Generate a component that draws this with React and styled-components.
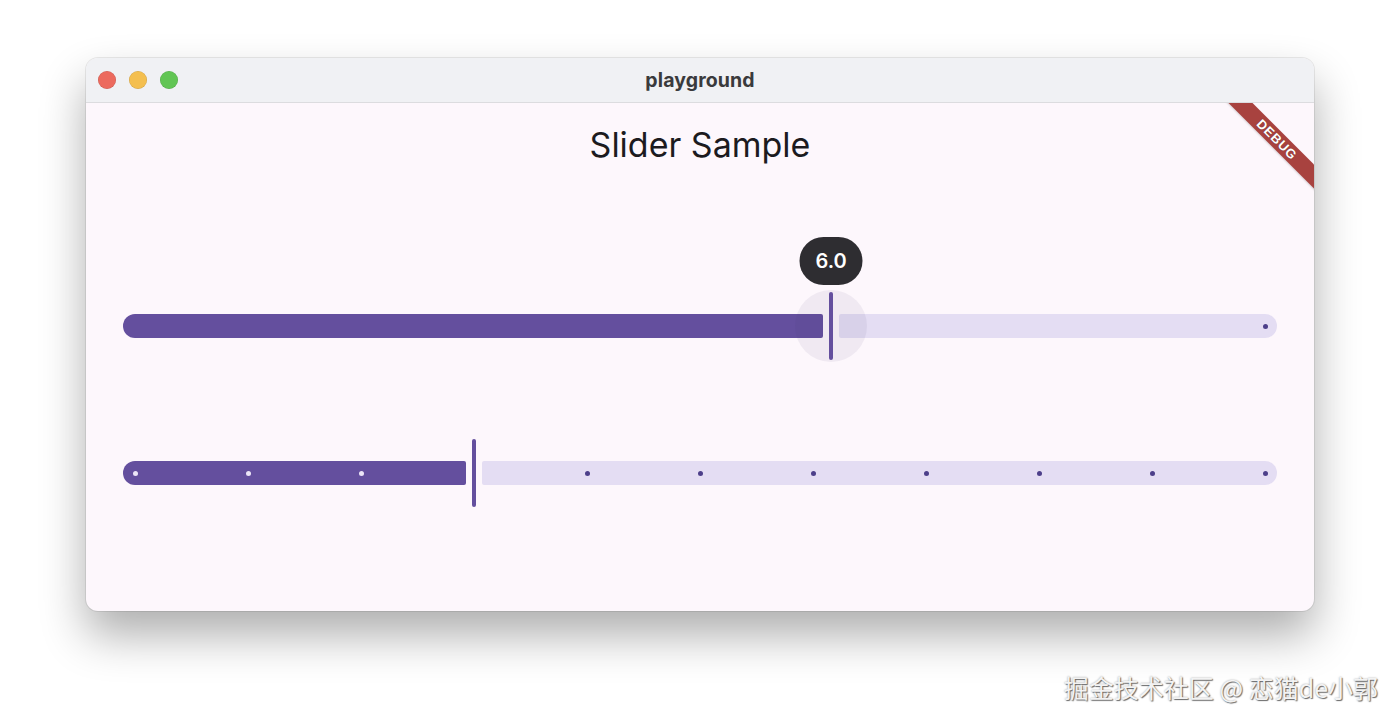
import React from "react";
import styled, { createGlobalStyle } from "styled-components";

const TRACK_WIDTH = 1154;
const EDGE = 12;

const GlobalStyle = createGlobalStyle`
  html, body {
    margin: 0;
    padding: 0;
    background: #ffffff;
  }
  body {
    font-family: Inter, "Noto Sans", "Liberation Sans", sans-serif;
  }
`;

const Page = styled.div`
  position: relative;
  width: 1400px;
  height: 725px;
  box-sizing: border-box;
  padding: 58px 86px 0;
  overflow: hidden;
`;

const Window = styled.div`
  height: 553px;
  display: flex;
  flex-direction: column;
  border-radius: 12px;
  overflow: hidden;
  background: #fdf7fc;
  box-shadow: 0 24px 46px rgba(0, 0, 0, 0.32), 0 0 0 1px rgba(0, 0, 0, 0.08);
`;

const TitleBar = styled.div`
  position: relative;
  height: 44px;
  flex-shrink: 0;
  display: flex;
  align-items: center;
  justify-content: center;
  background: #f0f1f4;
  border-bottom: 1px solid #dcdcdf;
`;

const Lights = styled.div`
  position: absolute;
  left: 12px;
  top: 13px;
  display: flex;
  gap: 13px;
`;

const Light = styled.span`
  width: 18px;
  height: 18px;
  border-radius: 50%;
  background: ${(p) => p.$color};
  box-shadow: inset 0 0 0 0.5px rgba(0, 0, 0, 0.15);
`;

const WindowTitle = styled.div`
  font-size: 19.5px;
  font-weight: 700;
  color: #3a3a3c;
  letter-spacing: 0.1px;
`;

const Content = styled.div`
  position: relative;
  flex: 1;
  display: flex;
  flex-direction: column;
  align-items: center;
  padding: 22px 37px 0;
  overflow: hidden;
`;

const Heading = styled.h1`
  margin: 0;
  font-size: 34px;
  line-height: 40px;
  font-weight: 400;
  color: #1c1b1f;
`;

const SliderList = styled.div`
  margin-top: 127px;
  display: flex;
  flex-direction: column;
  gap: 79px;
`;

const SliderRow = styled.div`
  position: relative;
  width: ${TRACK_WIDTH}px;
  height: 68px;
  display: flex;
  align-items: center;
`;

const ActiveTrack = styled.div`
  height: 24px;
  background: #644f9e;
  border-radius: 12px 2px 2px 12px;
`;

const InactiveTrack = styled.div`
  flex: 1;
  height: 24px;
  background: #e4ddf3;
  border-radius: 2px 12px 12px 2px;
`;

const Handle = styled.div`
  position: relative;
  width: 16px;
  height: 68px;
  display: flex;
  justify-content: center;
`;

const ThumbBar = styled.div`
  width: 4px;
  height: 68px;
  border-radius: 2px;
  background: #644f9e;
  position: relative;
  z-index: 2;
`;

const Halo = styled.div`
  position: absolute;
  left: 50%;
  top: 50%;
  width: 72px;
  height: 72px;
  margin: -36px 0 0 -36px;
  border-radius: 50%;
  background: rgba(73, 60, 110, 0.07);
  z-index: 1;
  pointer-events: none;
`;

const ValueBubble = styled.div`
  position: absolute;
  left: 50%;
  bottom: calc(100% + 7px);
  transform: translateX(-50%);
  width: 63px;
  height: 48px;
  border-radius: 24px;
  background: #2e2d31;
  color: #ffffff;
  display: flex;
  align-items: center;
  justify-content: center;
  font-size: 20px;
  font-weight: 600;
  z-index: 3;
`;

const Tick = styled.span`
  position: absolute;
  top: 50%;
  width: 5px;
  height: 5px;
  margin: -2.5px 0 0 -2.5px;
  border-radius: 50%;
  background: ${(p) => (p.$active ? "#ece5f7" : "#4d3f8a")};
  z-index: 1;
`;

const Banner = styled.div`
  position: absolute;
  top: 28px;
  right: -38px;
  width: 150px;
  height: 17px;
  background: #a8423f;
  transform: rotate(45deg);
  display: flex;
  align-items: center;
  justify-content: center;
  color: #ffffff;
  font-family: "Liberation Sans", Arial, sans-serif;
  font-size: 13px;
  font-weight: 700;
  letter-spacing: 0.8px;
  text-shadow: 0 0 1px rgba(0, 0, 0, 0.4);
  box-shadow: 0 1px 2px rgba(0, 0, 0, 0.15);
`;

const Watermark = styled.div`
  position: absolute;
  right: 22px;
  bottom: 20px;
  font-family: "Noto Sans CJK SC", "Noto Sans", sans-serif;
  font-size: 25px;
  color: #f3f3f3;
  text-shadow: 1px 1px 1px rgba(0, 0, 0, 0.55), 0 0 2px rgba(0, 0, 0, 0.35);
`;

function Slider({ fraction, divisions, label, endTickOnly }) {
  const center = EDGE + fraction * (TRACK_WIDTH - EDGE * 2);
  const ticks = [];
  if (endTickOnly) {
    ticks.push(TRACK_WIDTH - EDGE);
  } else {
    for (let i = 0; i <= divisions; i++) {
      ticks.push(EDGE + (i / divisions) * (TRACK_WIDTH - EDGE * 2));
    }
  }

  return (
    <SliderRow>
      <ActiveTrack style={{ width: center - 8 }} />
      <Handle>
        {label && <Halo />}
        {label && <ValueBubble>{label}</ValueBubble>}
        <ThumbBar />
      </Handle>
      <InactiveTrack />
      {ticks
        .filter((x) => Math.abs(x - center) > 10)
        .map((x) => (
          <Tick key={x} $active={x < center} style={{ left: x }} />
        ))}
    </SliderRow>
  );
}

export default function App() {
  return (
    <>
      <GlobalStyle />
      <Page>
        <Window>
          <TitleBar>
            <Lights>
              <Light $color="#ec6a5e" />
              <Light $color="#f4bf4f" />
              <Light $color="#61c554" />
            </Lights>
            <WindowTitle>playground</WindowTitle>
          </TitleBar>
          <Content>
            <Banner>DEBUG</Banner>
            <Heading>Slider Sample</Heading>
            <SliderList>
              <Slider fraction={0.616} label="6.0" endTickOnly />
              <Slider fraction={0.3} divisions={10} />
            </SliderList>
          </Content>
        </Window>
        <Watermark>掘金技术社区 @ 恋猫de小郭</Watermark>
      </Page>
    </>
  );
}
